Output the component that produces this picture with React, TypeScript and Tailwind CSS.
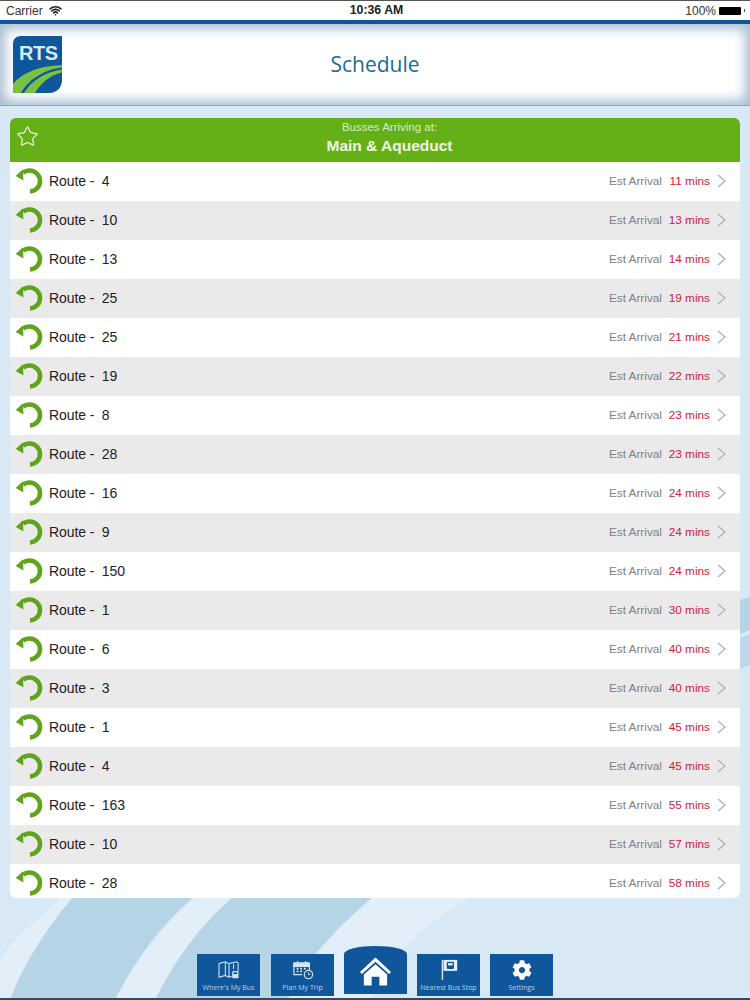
import { Star, Wifi } from "lucide-react";
import { FaCog } from "react-icons/fa";

const rows = [
  ["4", "11"], ["10", "13"], ["13", "14"], ["25", "19"], ["25", "21"], ["19", "22"], ["8", "23"],
  ["28", "23"], ["16", "24"], ["9", "24"], ["150", "24"], ["1", "30"], ["6", "40"], ["3", "40"],
  ["1", "45"], ["4", "45"], ["163", "55"], ["10", "57"], ["28", "58"],
];

const UTurn = () => (
  <svg width="28" height="29" viewBox="0 0 28 29" className="shrink-0">
    <path d="M8 5.6 A10.5 10.5 0 0 1 14 3.5 A10.5 10.5 0 0 1 15 24.5" fill="none" stroke="#5fa51c" strokeWidth="4.6" />
    <path d="M0.7 9 L8 2.2 L8.4 13.6 Z" fill="#5fa51c" />
  </svg>
);

const Row = ({ route, mins, odd }: { route: string; mins: string; odd: boolean }) => (
  <div className={`flex h-[39px] shrink-0 items-center pl-[5px] pr-[14px] ${odd ? "bg-[#ebeaeb]" : "bg-white"}`}>
    <UTurn />
    <span className="ml-[6px] text-[14px] tracking-[-0.1px] text-[#222]">Route -&nbsp;&nbsp;{route}</span>
    <span className="ml-auto text-[11.8px] text-[#808085]">Est Arrival</span>
    <span className="w-[48px] text-right text-[11.8px] text-[#d0203c]">{mins} mins</span>
    <svg width="9" height="14" viewBox="0 0 9 14" className="ml-[7px] -translate-y-[1px]">
      <path d="M1 1 L8 7 L1 13" fill="none" stroke="#b0b0b0" strokeWidth="1.3" />
    </svg>
  </div>
);

const NavButton = ({ label, children }: { label: string; children: React.ReactNode }) => (
  <div className="flex h-[42px] w-[63px] flex-col items-center justify-end bg-[#10569b] pb-[4px]">
    {children}
    <span className="mt-[3px] whitespace-nowrap text-[7px] leading-[9px] text-[#b7d2e8]">{label}</span>
  </div>
);

export default function App() {
  return (
    <div className="relative h-[1000px] w-[750px] overflow-hidden bg-[#d8e8f5] font-['Liberation_Sans',sans-serif]">
      {/* background swooshes */}
      <svg className="absolute inset-0" width="750" height="1000" viewBox="0 0 750 1000">
        <path d="M0 1000 L0 960 C15 935 45 915 60 898 L72 898 C50 925 25 960 10 1000 Z" fill="#e2eff9" />
        <path d="M10 1000 C25 960 50 925 72 898 L193 898 C160 925 135 960 115 1000 Z" fill="#b5d4e6" />
        <path d="M115 1000 C135 960 165 925 193 898 L232 898 C200 925 175 960 155 1000 Z" fill="#e2eff9" />
        <path d="M155 1000 C175 960 200 925 232 898 L372 898 C340 925 305 960 288 1000 Z" fill="#b5d4e6" />
        <path d="M288 1000 C305 960 340 925 372 898 L470 898 C420 925 390 960 370 1000 Z" fill="#e2eff9" />
        <path d="M740 600 L750 597 L750 630 L740 634 Z" fill="#b5d4e6" />
        <path d="M740 638 L750 634 L750 665 L740 669 Z" fill="#bcd8ea" />
      </svg>

      <div className="relative flex flex-col">
        {/* status bar */}
        <div className="flex h-[20px] items-center justify-between border-t border-[#555] bg-white pl-[6px] pr-[5px] text-[12px] text-[#333]">
          <div className="flex w-[150px] items-center gap-[6px]">
            <span>Carrier</span>
            <Wifi size={13} strokeWidth={3} color="#222" />
          </div>
          <span className="translate-x-[1px] text-[12.3px] font-bold text-[#222]">10:36 AM</span>
          <div className="flex w-[150px] items-center justify-end gap-[3px]">
            <span>100%</span>
            <div className="h-[8px] w-[22px] rounded-[1px] bg-black" />
            <div className="h-[3px] w-[1px] bg-[#555]" />
          </div>
        </div>

        {/* title bar */}
        <div className="h-[4px] bg-[#10569b]" />
        <div className="flex h-[82px] items-center justify-center border-b border-[#8fa5b8] bg-white shadow-[inset_0_0_12px_5px_#a9bfd3]">
          <span className="font-['Open_Sans',sans-serif] text-[21px] text-[#1c6a94]">Schedule</span>
        </div>

        {/* schedule card */}
        <div className="mx-[10px] mt-[12px] flex h-[780px] flex-col overflow-hidden rounded-b-md rounded-t-md">
          <div className="relative flex h-[44px] shrink-0 flex-col items-center bg-[#65b017] pl-[29px] pt-[2px] text-white">
            <Star size={23} strokeWidth={1.3} color="#e8f5d8" className="absolute left-[6px] top-[7px]" />
            <span className="text-[11.5px] leading-[14px] text-[#d7ecc0]">Busses Arriving at:</span>
            <span className="mt-[2px] text-[15.5px] font-bold leading-[20px] text-[#eef7e2]">Main &amp; Aqueduct</span>
          </div>
          {rows.map(([route, mins], i) => (
            <Row key={i} route={route} mins={mins} odd={i % 2 === 1} />
          ))}
        </div>
      </div>

      {/* bottom nav */}
      <div className="absolute bottom-[4px] left-[197px] flex items-end gap-[10px] font-['Open_Sans',sans-serif]">
        <NavButton label="Where's My Bus">
          <svg width="24" height="20" viewBox="0 0 24 22" fill="none" stroke="#cfe0ef" strokeWidth="1.2">
            <path d="M1 4 L8 2 L12 4 L20 2 L22 3 L22 12 M1 4 L1 19 L8 17 L12 19 L15 18 M8 2 L8 17 M12 4 L12 19 M17 4 L17 10" />
            <rect x="15.5" y="12" width="7" height="8" rx="1" fill="#cfe0ef" stroke="none" />
            <rect x="17" y="13.5" width="4" height="2" fill="#10569b" stroke="none" />
          </svg>
        </NavButton>
        <div className="ml-[1px]">
          <NavButton label="Plan My Trip">
            <svg width="24" height="20" viewBox="0 0 24 22" fill="none" stroke="#d6e5f1" strokeWidth="1.3">
              <path d="M6 1 L6 4 M15 1 L15 4" />
              <path d="M2 3.5 L19 3.5 L19 11 M2 3.5 L2 16 L11 16" />
              <path d="M2 3.5 H19 V7 H2 Z" fill="#d6e5f1" />
              <path d="M5 9.5 H7 M9 9.5 H11 M13 9.5 H15 M5 12.5 H7 M9 12.5 H11" strokeWidth="2" />
              <circle cx="18" cy="16" r="4.6" />
              <path d="M18 13.5 V16 H20" strokeWidth="1" />
            </svg>
          </NavButton>
        </div>
        <div className="mb-[2px] flex h-[48px] w-[63px] items-center justify-center rounded-t-[50%_8px] bg-[#10569b] pt-[2px]">
          <svg width="33" height="30" viewBox="0 0 34 30" fill="#ffffff">
            <path d="M17 1 L33 16 L31 18 L17 5.5 L3 18 L1 16 Z" />
            <path d="M17 8 L29 18.5 L29 30 L21 30 L21 21 L13 21 L13 30 L5 30 L5 18.5 Z" />
          </svg>
        </div>
        <NavButton label="Nearest Bus Stop">
          <svg width="22" height="21" viewBox="0 0 22 23">
            <rect x="3" y="1" width="1.6" height="22" fill="#d6e5f1" />
            <path d="M5 1 H20 V13 H5 Z" fill="#e6eff7" />
            <rect x="8.5" y="3" width="8" height="8" rx="1.5" fill="#10569b" />
            <rect x="10" y="4.5" width="5" height="2.5" fill="#e6eff7" />
          </svg>
        </NavButton>
        <NavButton label="Settings">
          <FaCog size={20} color="#ffffff" />
        </NavButton>
      </div>
      <div className="absolute bottom-0 left-0 h-[2px] w-full bg-[#33495c]" />

      {/* logo */}
      <div className="absolute left-[13px] top-[35px] h-[58px] w-[49px]">
        <svg className="absolute inset-0" width="49" height="58" viewBox="0 0 49 58">
          <path d="M8 1 H49 V45 C49 52 44 58 36 58 H1 C0.5 58 0 57 0 56 V9 C0 4 3 1 8 1 Z" fill="#10569b" />
          <path d="M0 49 C9 38 25 31 49 30 L49 32.5 C34 34 16 43 8 58 H1 L0 56 Z" fill="#7ac143" />
          <path d="M11 58 C18 46 32 37 49 34.5 L49 37.5 C37 40 28 48 22 58 Z" fill="#7ac143" />
        </svg>
        <span className="absolute left-[6px] top-[7px] text-[20px] font-bold leading-[22px] tracking-[-0.5px] text-[#d6ecf5]">RTS</span>
      </div>
    </div>
  );
}
